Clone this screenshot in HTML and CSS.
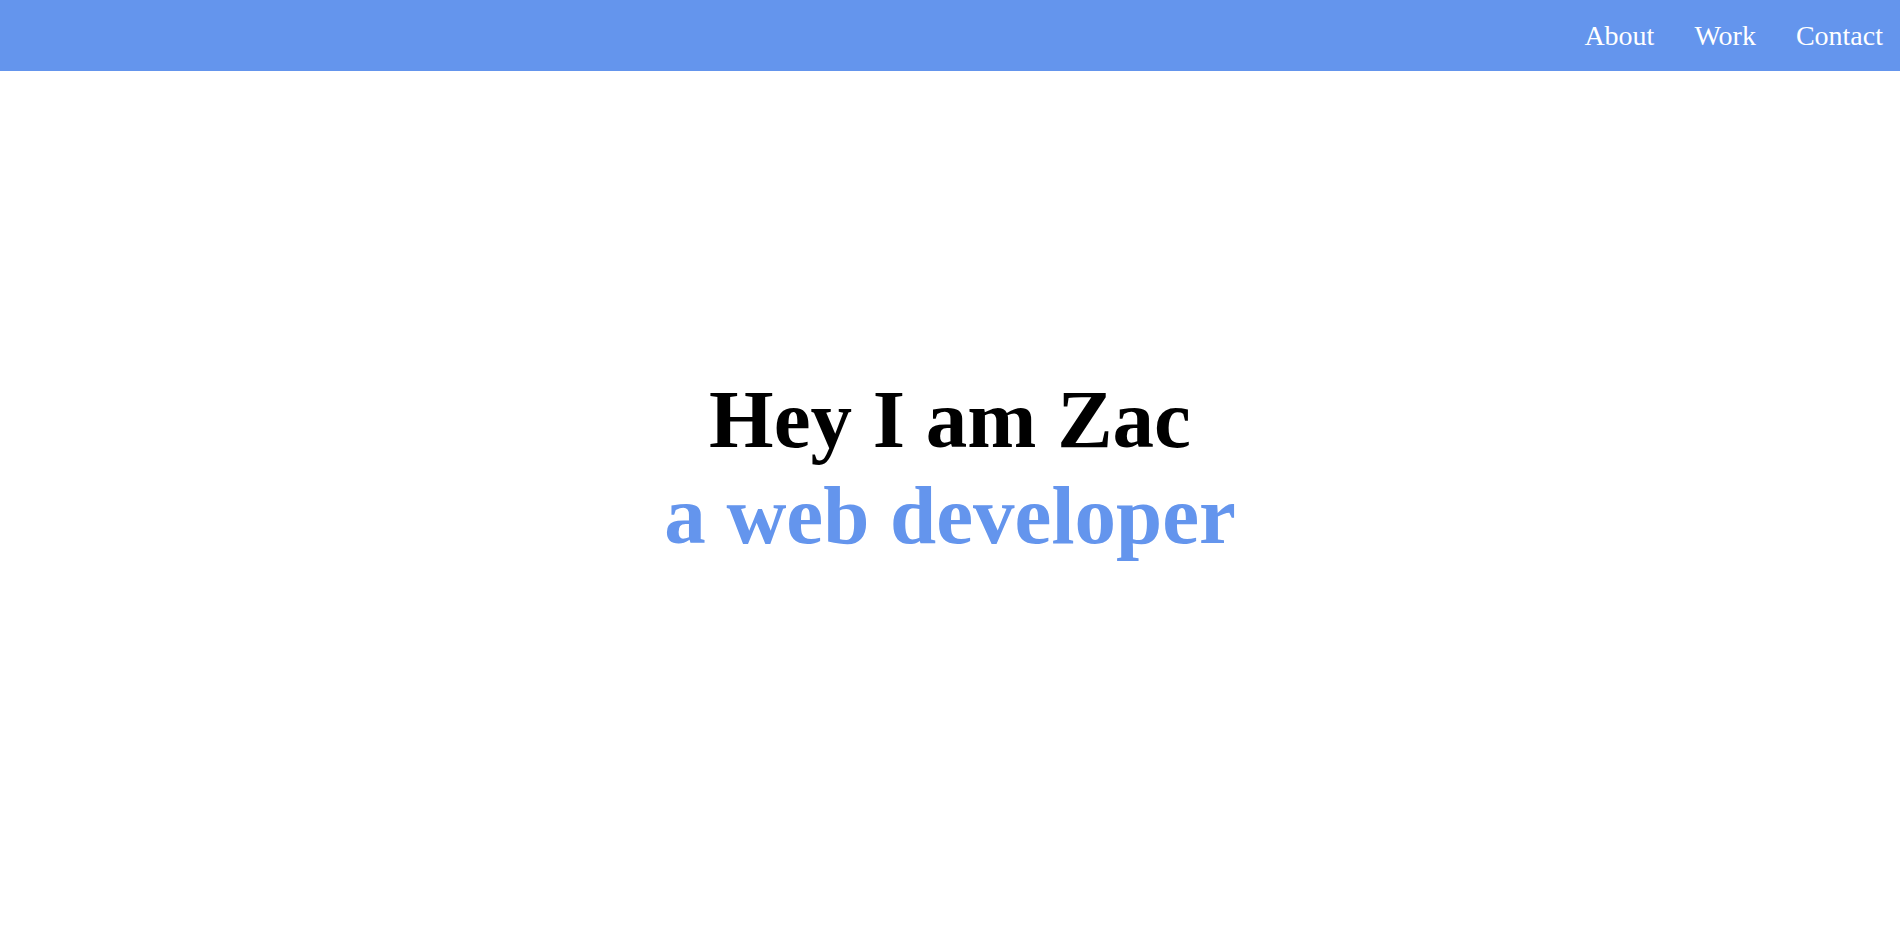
FILE: index.html
```html
<!DOCTYPE html>
<html lang="en">
<head>
<meta charset="utf-8">
<title>Zac</title>
<link rel="stylesheet" href="styles.css">
</head>
<body>
<header class="topbar">
  <nav class="nav">
    <a class="nav-link" href="#about">About</a>
    <a class="nav-link" href="#work">Work</a>
    <a class="nav-link" href="#contact">Contact</a>
  </nav>
</header>
<main class="hero">
  <h1 class="hero-title">Hey I am Zac<br><span class="hero-accent">a web developer</span></h1>
</main>
</body>
</html>
```

FILE: styles.css
```css
html, body {
  margin: 0;
  padding: 0;
}
body {
  font-family: "Liberation Serif", "Times New Roman", serif;
  background: #ffffff;
  color: #000000;
}
.topbar {
  position: fixed;
  top: 0;
  left: 0;
  right: 0;
  height: 71px;
  background: #6495ed;
  display: flex;
  align-items: center;
  justify-content: flex-end;
  padding-right: 17px;
}
.nav {
  display: flex;
  gap: 40px;
}
.nav-link {
  color: #ffffff;
  text-decoration: none;
  font-size: 28px;
}
.hero {
  height: 100vh;
  display: flex;
  align-items: center;
  justify-content: center;
}
.hero-title {
  margin: 0;
  font-size: 83px;
  font-weight: bold;
  text-align: center;
  line-height: normal;
}
.hero-accent {
  color: #6495ed;
}
```
